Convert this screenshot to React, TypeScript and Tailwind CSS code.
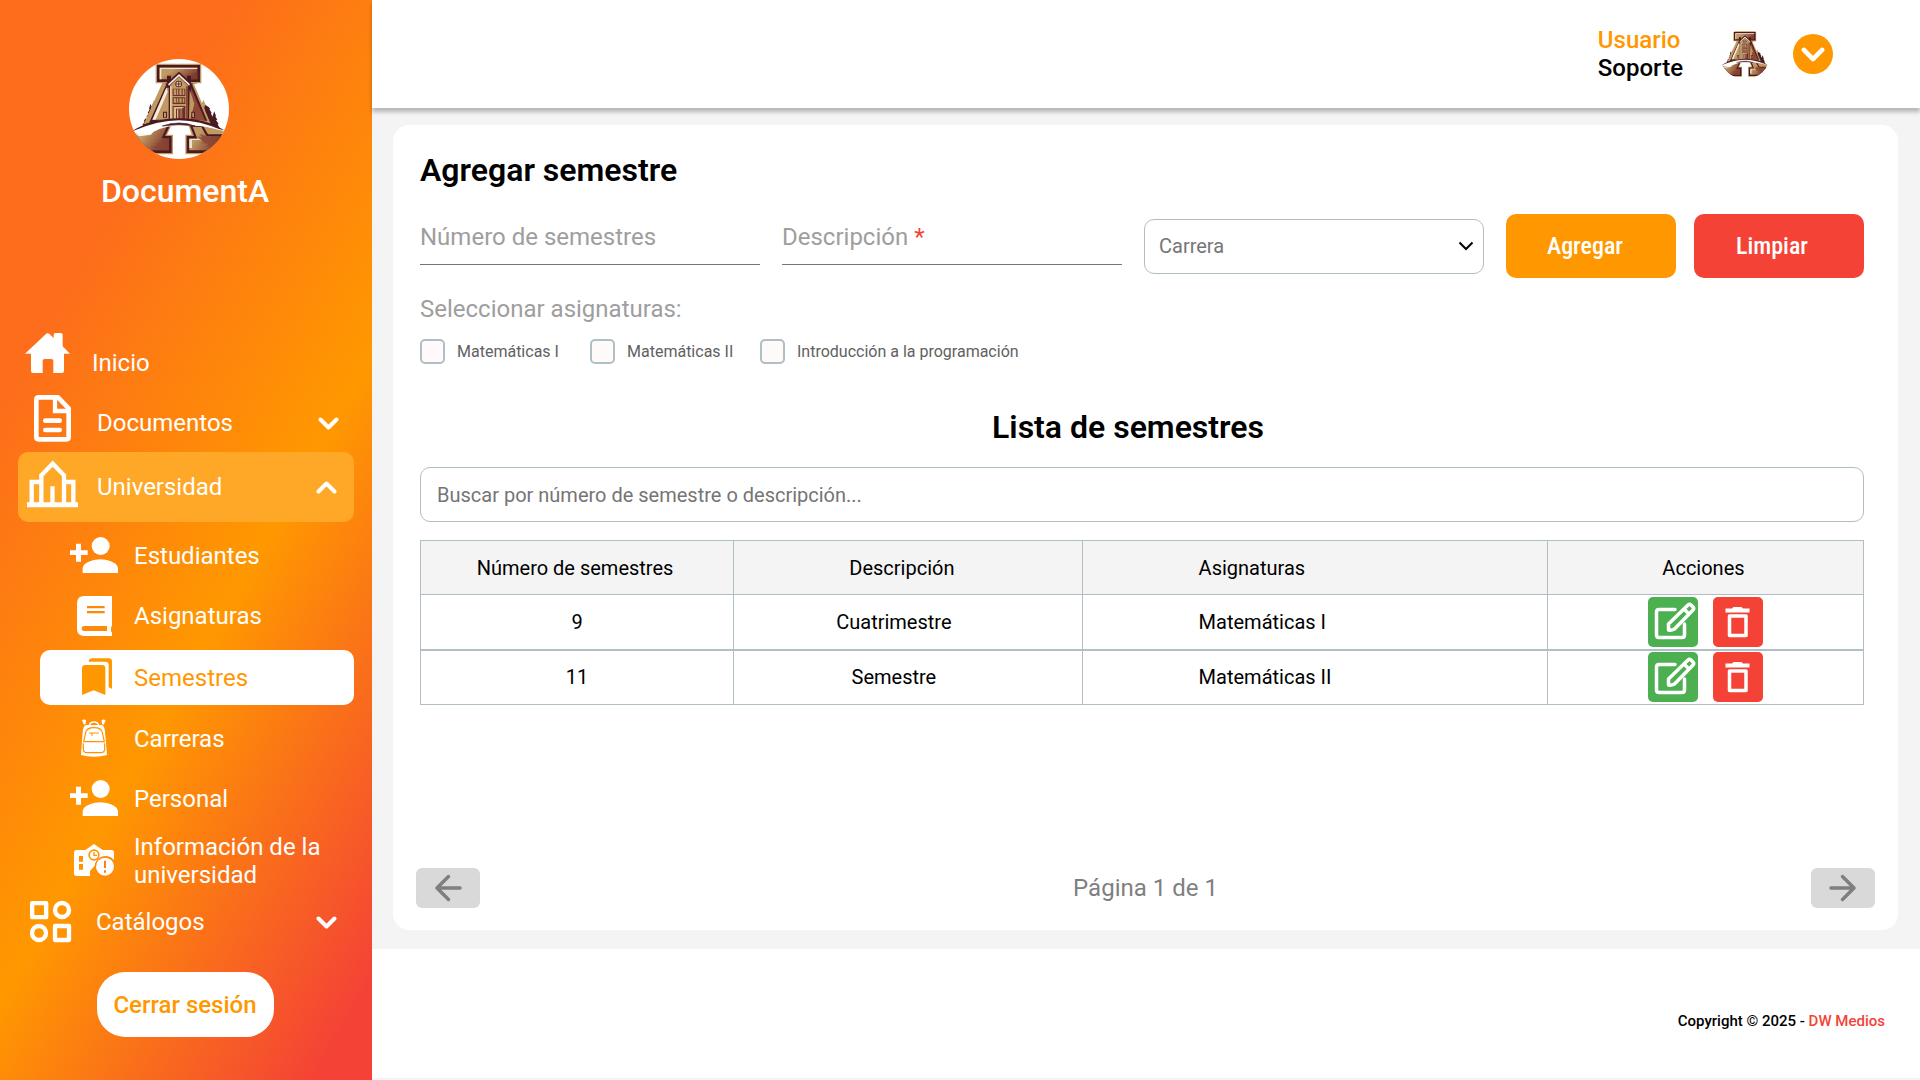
import React from "react";

/* ---------- Logo ---------- */

function Logo({ className, disc, id }: { className: string; disc?: boolean; id: string }) {
  return (
    <svg viewBox="12 12 300 300" className={className} role="img" aria-label="DocumentA">
      <defs>
        <clipPath id={`${id}-clip`}>
          <circle cx="162" cy="162" r="150" />
        </clipPath>
        <linearGradient id={`${id}-fill`} x1="0" y1="0" x2="1" y2="0.5">
          <stop offset="0.35" stopColor="#c19a63" />
          <stop offset="1" stopColor="#7f3a2e" />
        </linearGradient>
      </defs>
      <g clipPath={`url(#${id}-clip)`}>
        {disc && <rect x="12" y="12" width="300" height="300" fill="#ffffff" />}
        {/* trees */}
        <path d="M88 134l5 14-3 1 6 16-4 1 4 40H74l4-50z" fill="#c19a63" />
        <path d="M235 134l-5 14 3 1-6 16 4 1-4 40h22l-4-50z" fill="#c19a63" />
        <path d="M76 146l4 10-2 1 6 12-3 1 7 12-3 1 8 13-3 1 5 14-44 13 1-10 4-3-4-1 7-10-3-1 6-10 2 6 3-8-3-1 7-11-3-1 6-11-2-1z" fill="#4a1a22" />
        <path d="M241 150l-4 10 2 1-6 12 3 1-8 12 3 1-7 13 60 20-6-12 3-1-8-12 4-1-6-10 2-1-5-14-6 16-4-10 2-1-7-12 3-1-6-6z" fill="#4a1a22" />
        {/* legs */}
        <path d="M116 72h92l8 14-9 2 50 118-40-10H98l-42 12 56-124z" fill="#c19a63" />
        <path d="M120 76h84l-2 14 45 108-40-6h-90l-46 14 52-116z" fill="#4a1a22" />
        <path d="M124 98h10v96H82z" fill="#c19a63" />
        <path d="M124 98l-42 96h10l36-84z" fill="#f5eadb" />
        <path d="M198 98l42 98h-44z" fill="#8f4836" />
        <path d="M194 104l14 42-12 48h-4z" fill="#c19a63" />
        <path d="M114 170h12v18h-12zM199 170h11v18h-11z" fill="#4a1a22" />
        <path d="M117 173h6v13h-6zM202 173h5v13h-5z" fill="#c19a63" />
        {/* top serif */}
        <path d="M92 26h137v59H92z" fill="#c19a63" />
        <path d="M96 30h129v51H96z" fill="#4a1a22" />
        <path d="M104 38h113v35H104z" fill={`url(#${id}-fill)`} />
        <path d="M104 38h113v4H109v31h-5z" fill="#f1e3d0" />
        <path d="M217 38v35h-26l18-6-12-2 16-6-10-2 14-6z" fill="#7f3a2e" />
        {/* tower */}
        <path d="M126 62h12v10l24-22 24 22V62h12v24l-6 4v106h-61V90l-5-6z" fill="#4a1a22" />
        <path d="M135 92l27-27 27 27v102h-54z" fill="#c19a63" />
        <path d="M129 88l33-31 33 31-3 4-30-28-30 28z" fill="#f5eadb" />
        <path d="M135 94h5v100h-5z" fill="#e2c9a3" />
        <path d="M183 94h6v100h-6z" fill="#8f4836" />
        <circle cx="161" cy="87" r="10" fill="#4a1a22" />
        <circle cx="161" cy="87" r="7.5" fill="#e9d3b2" />
        <path d="M161 79v16M153 87h16" stroke="#4a1a22" strokeWidth="2.5" />
        <path d="M143 101h38v22h-38zM143 127h38v20h-38z" fill="#6b2f2a" />
        <path d="M146 103h7v17h-7zM155 103h5v17h-5zM163 103h7v17h-7zM173 103h5v17h-5zM146 130h7v13h-7zM155 130h5v13h-5zM163 130h7v13h-7zM173 130h5v13h-5z" fill="#c19a63" />
        <path d="M143 153h38v40h-38z" fill="#6b2f2a" />
        <path d="M146 156h32l-8 5h-17v32h-7zM156 163h4v28h-4z" fill="#d9b988" />
        <path d="M164 162h8v29h-8z" fill="#a2634a" />
        {/* left foot */}
        <path d="M24 228l76-20 40 2-14 29h18v59H40L10 240z" fill="#c19a63" />
        <path d="M28 230l74-20 33 2-15 31h20v51H44L14 242z" fill="#4a1a22" />
        <path d="M30 238l36-3 22-18 38-3-16 36h22v36H54z" fill={`url(#${id}-fill)`} />
        <path d="M30 238l34-2 20-19 14-4-20 26-34 5z" fill="#fbf4ea" />
        <path d="M132 250v36H68l30-5-24-5 34-5-22-4 30-5-14-4z" fill="#8a4434" opacity=".8" />
        {/* right foot */}
        <path d="M190 210l44 2 72 18 10 12-32 56H181v-59h19z" fill="#c19a63" />
        <path d="M195 212l40 2 14 24h60l-30 56h-94v-51h22z" fill="#4a1a22" />
        <path d="M203 215l26 1 16 28h46l-20 42h-78v-35h24z" fill={`url(#${id}-fill)`} />
        <path d="M193 251h26l12 4h-30v24h-8z" fill="#f1e3d0" />
        <path d="M229 216l14 27-20-6 10 11-16-4 20 18-12 2 28 2-10 8 34 0-16 12h10l20-42h-46z" fill="#8a4434" opacity=".85" />
        {/* bridge */}
        <path d="M22 228q60-38 140-38t136 36l-44-10q-90-26-164 0l-34 14z" fill="#4a1a22" />
        <path d="M24 228q76-32 138-32t128 30q-132-34-204 4l-14 8-46-2z" fill="#ffffff" />
        <path d="M112 213q24-9 50-9t48 9q-48-8-98 0z" fill="#4a1a22" stroke="#4a1a22" strokeWidth="2" />
      </g>
    </svg>
  );
}

/* ---------- Icons ---------- */

const Chevron = ({ up, className }: { up?: boolean; className: string }) => (
  <svg viewBox="0 0 21 13" className={className} fill="none" stroke="currentColor" strokeWidth="4" strokeLinecap="round" strokeLinejoin="round" aria-hidden="true">
    <path d={up ? "M2.5 10.5 10.5 2.5 18.5 10.5" : "M2.5 2.5 10.5 10.5 18.5 2.5"} />
  </svg>
);

const HomeIcon = () => (
  <svg viewBox="66 66 186 186" className="h-[62px] w-[62px] shrink-0" fill="currentColor" aria-hidden="true">
    <path d="M75 131 137 73q6-6 12 0l12 11V74q0-5 5-5h17q5 0 5 5v35l22 22h-18v52q0 6-6 6h-26v-36q0-6-6-6h-20q-6 0-6 6v36H99q-6 0-6-6v-52z" />
  </svg>
);

const DocIcon = () => (
  <svg viewBox="66 252 186 174" className="h-[58px] w-[62px] shrink-0" fill="none" stroke="currentColor" strokeWidth="14" strokeLinejoin="round" strokeLinecap="round" aria-hidden="true">
    <path d="M116 262h58l32 33v86q0 7-7 7h-83q-7 0-7-7V269q0-7 7-7z" />
    <path d="M165 265v38h38" strokeWidth="13" strokeLinecap="butt" strokeLinejoin="miter" />
    <path d="M136 332h43M136 360h43" />
  </svg>
);

const UniversityIcon = () => (
  <svg viewBox="66 426 186 210" className="h-[70px] w-[62px] shrink-0" fill="none" stroke="currentColor" strokeWidth="13" aria-hidden="true">
    <path d="M81 584h153" strokeWidth="15" />
    <path d="M124 580v-84l34-35 34 35v84" />
    <path d="M95 580v-64h28M192 516h28v64M157.500 580v-51" />
  </svg>
);

const CatalogIcon = () => (
  <svg viewBox="66 519 186 174" className="h-[58px] w-[62px] shrink-0" fill="none" stroke="currentColor" strokeWidth="13" strokeLinejoin="round" aria-hidden="true">
    <path d="M96.500 549.500h42v42h-42zM165 618h42v42h-42z" />
    <circle cx="186" cy="570" r="21" />
    <circle cx="117" cy="639" r="21" />
  </svg>
);

const PersonAddIcon = () => (
  <svg viewBox="186 18 180 180" className="h-[60px] w-[60px] shrink-0" fill="currentColor" aria-hidden="true">
    <circle cx="302" cy="78" r="27" />
    <path d="M248 159v-14c0-18 36-27 53-27s53 9 53 27v14zM228 71h15v20h20v14h-20v20h-15v-20h-18V91h18z" />
  </svg>
);

const BookIcon = () => (
  <svg viewBox="186 198 180 180" className="h-[60px] w-[60px] shrink-0" fill="currentColor" fillRule="evenodd" aria-hidden="true">
    <path d="M253 228h83v88q-5 8-3 18l3 4v10h-83q-22 0-22-20v-78q0-22 22-22zm8 30v7h53v-7zm0 15v7h53v-7zm-8 45q-8 0-8 7.500t8 7.500h68v-15z" />
  </svg>
);

const BookmarksIcon = () => (
  <svg viewBox="186 390 180 165" className="h-[55px] w-[60px] shrink-0" fill="currentColor" aria-hidden="true">
    <path d="M256 435h50q10 0 10 10v80l-35-14-35 14v-80q0-10 10-10z" />
    <path d="M266 425q1-10 11-10h49q10 0 10 10v81l-10-4v-67q0-10-10-10z" />
  </svg>
);

const BackpackIcon = () => (
  <svg viewBox="186 -33 180 180" className="h-[60px] w-[60px] shrink-0" fill="none" stroke="currentColor" aria-hidden="true">
    <path d="M246 1q6-4 12-1l-1 12-5 2zM317 1q-6-4-12-1l1 12 5 2z" fill="currentColor" stroke="none" />
    <path d="M268 16q2-10 14-10t14 10" strokeWidth="4" />
    <path fill="currentColor" stroke="none" d="M258 15h48q7 2 9 20l6 70q-18 5-39 5t-39-5l5-70q2-18 10-20z" />
    <g stroke="#ff9300" strokeWidth="3.500">
      <path d="M251 65l6-27q3-15 25-15t25 15l6 27z" />
      <path d="M250 70v17q0 11 12 11h40q12 0 12-11V70" />
      <path d="M267 39h30M276 39v8" />
    </g>
  </svg>
);

const SchoolInfoIcon = () => (
  <svg viewBox="186 327 180 192" className="h-[64px] w-[60px] shrink-0" aria-hidden="true">
    <path fill="currentColor" d="M230 390h26l26-18 26 18h26q8 0 8 8v22q-10-12-27-12-26 3-29 27l-16 18v15h-40q-8 0-8-8v-62q0-8 8-8z" />
    <g fill="#ff9300">
      <path d="M237 408h12v17h-12zM237 432h12v17h-12z" />
      <circle cx="282" cy="405" r="17" />
    </g>
    <circle cx="282" cy="405" r="12" fill="currentColor" />
    <path d="M282 396v10h9" fill="none" stroke="#ff9300" strokeWidth="4" />
    <circle cx="315" cy="440" r="31" fill="#fe8a0c" />
    <circle cx="315" cy="440" r="27" fill="currentColor" />
    <path d="M315 422v22M315 451v7" stroke="#fe7d14" strokeWidth="6" />
  </svg>
);

const EditIcon = () => (
  <svg viewBox="0 0 50 50" className="size-[50px]" fill="none" stroke="currentColor" strokeWidth="3.5" strokeLinejoin="round" strokeLinecap="round" aria-hidden="true">
    <path d="M27 12.500H11q-2.500 0-2.500 2.500v23q0 2.500 2.500 2.500h23q2.500 0 2.500-2.500V27" />
    <path d="M20.500 33v-6L40 8q1.500-1.300 3 0l2 2q1.500 1.500 0 3L26.500 32q-3 1.500-6 1zM36 12l5 5" />
  </svg>
);

const TrashIcon = () => (
  <svg viewBox="0 0 50 50" className="size-[50px]" fill="none" aria-hidden="true">
    <path fill="currentColor" d="M20.500 10h8l1.500 1.500h6.500v4h-24v-4H19z" />
    <path stroke="currentColor" strokeWidth="3.5" strokeLinejoin="round" d="M16.500 19h16.500v19.500H16.500z" />
  </svg>
);

const ArrowIcon = ({ right }: { right?: boolean }) => (
  <svg viewBox="0 0 64 40" className={right ? "h-10 w-16 rotate-180" : "h-10 w-16"} fill="none" stroke="#7f7f7f" strokeWidth="3.5" strokeLinecap="round" strokeLinejoin="round" aria-hidden="true">
    <path d="M44 20H21M32.500 8.500 21 20l11.500 11.500" />
  </svg>
);

/* ---------- Sidebar ---------- */

const subItems = [
  { label: "Estudiantes", icon: <PersonAddIcon /> },
  { label: "Asignaturas", icon: <BookIcon /> },
  { label: "Semestres", icon: <BookmarksIcon />, active: true },
  { label: "Carreras", icon: <BackpackIcon /> },
  { label: "Personal", icon: <PersonAddIcon /> },
  { label: "Información de la universidad", icon: <SchoolInfoIcon /> },
];

function Sidebar() {
  return (
    <aside className="flex w-[372px] shrink-0 flex-col bg-[linear-gradient(120deg,#fd6d1b_23%,#ff9800_58%,#f44336_94%)] px-[18px] pt-[59px] pb-[42px] text-white">
      <div className="flex flex-col items-center pr-[2px]">
        <Logo id="side" disc className="mr-3 size-[100px]" />
        <p className="mt-3 text-[32px] leading-10 font-medium">DocumentA</p>
      </div>
      <nav className="mt-[121px] text-2xl leading-7">
        <a href="#inicio" className="flex items-center pl-1">
          <HomeIcon />
          <span className="ml-2">Inicio</span>
        </a>
        <button type="button" className="flex w-full items-center pr-[15px] pl-1 text-left">
          <DocIcon />
          <span className="ml-[13px] flex-1">Documentos</span>
          <Chevron className="h-[13px] w-[21px]" />
        </button>
        <button type="button" aria-expanded="true" className="mb-1 flex w-full items-center rounded-[10px] bg-[#ffa726] pr-[17px] pl-1 text-left">
          <UniversityIcon />
          <span className="ml-[13px] flex-1">Universidad</span>
          <Chevron up className="h-[13px] w-[21px]" />
        </button>
        <ul className="pl-[22px]">
          {subItems.map((item) => (
            <li key={item.label}>
              <a
                href={`#${item.label.toLowerCase().split(" ")[0]}`}
                aria-current={item.active ? "page" : undefined}
                className={
                  item.active
                    ? "my-1 flex items-center gap-3 rounded-[10px] bg-white pl-[22px] text-[#ff9800]"
                    : "flex items-center gap-3 pl-[22px]"
                }
              >
                {item.icon}
                <span>{item.label}</span>
              </a>
            </li>
          ))}
        </ul>
        <button type="button" className="flex w-full items-center pr-[17px] pl-1 text-left">
          <CatalogIcon />
          <span className="ml-3 flex-1">Catálogos</span>
          <Chevron className="h-[13px] w-[21px]" />
        </button>
      </nav>
      <div className="mt-[21px] flex justify-center pr-[2px]">
        <button type="button" className="h-[65px] w-[177px] rounded-[28px] bg-white text-2xl font-medium text-[#ff9800]">
          Cerrar sesión
        </button>
      </div>
    </aside>
  );
}

/* ---------- Main ---------- */

function TopBar() {
  return (
    <header className="relative flex h-[108px] items-center justify-end bg-white pr-[87px] shadow-[0_4px_4px_rgba(0,0,0,0.25)]">
      <div className="mr-[37px] text-2xl leading-7 font-medium">
        <p className="text-[#ff9800]">Usuario</p>
        <p className="text-black">Soporte</p>
      </div>
      <Logo id="top" className="mr-[23px] size-[50px]" />
      <button type="button" aria-label="Abrir menú de usuario" className="flex size-10 items-center justify-center rounded-full bg-[#ff9800] text-white">
        <Chevron className="h-[15px] w-6" />
      </button>
    </header>
  );
}

const subjects = ["Matemáticas I", "Matemáticas II", "Introducción a la programación"];

const fields = [
  { id: "numero", label: "Número de semestres", required: false },
  { id: "descripcion", label: "Descripción", required: true },
];

function SemesterForm() {
  return (
    <form className="pr-[11px] pl-1" onSubmit={(e) => e.preventDefault()}>
      <h1 className="text-[32px] leading-10 font-semibold text-black">Agregar semestre</h1>
      <div className="mt-6 grid grid-cols-[1fr_1fr_1fr_auto] items-start gap-[22px]">
        {fields.map((field) => (
          <div key={field.id} className="flex h-[51px] min-w-0 items-center border-b border-[#757575] pb-1">
            <label htmlFor={field.id} className="shrink-0 text-2xl text-[#9e9e9e]">
              {field.label}
              {field.required && <span className="text-[#f44336]"> *</span>}
            </label>
            <input id={field.id} required={field.required} className="ml-2 w-0 min-w-0 flex-1 text-2xl text-black outline-none" />
          </div>
        ))}
        <div className="grid min-w-0 items-center self-center">
          <select aria-label="Carrera" className="col-start-1 row-start-1 h-[55px] w-full appearance-none rounded-[10px] border border-[#b0bec5] bg-white px-[14px] text-xl text-[#757575]">
            <option>Carrera</option>
          </select>
          <svg viewBox="0 0 16 10" className="pointer-events-none col-start-1 row-start-1 mr-[10px] h-[10px] w-4 justify-self-end" fill="none" stroke="#000000" strokeWidth="2" aria-hidden="true">
            <path d="M1.500 1.500 8 8l6.500-6.500" />
          </svg>
        </div>
        <div className="flex gap-[18px] font-['Roboto_Condensed',Roboto,sans-serif] text-2xl font-medium text-white">
          <button type="submit" className="h-16 w-[170px] rounded-[10px] bg-[#ff9800] pr-3">Agregar</button>
          <button type="reset" className="h-16 w-[170px] rounded-[10px] bg-[#f44336] pr-[14px]">Limpiar</button>
        </div>
      </div>
      <fieldset className="mt-[17px]">
        <legend className="text-2xl leading-7 text-[#9e9e9e]">Seleccionar asignaturas:</legend>
        <div className="mt-4 grid grid-cols-[170px_170px_auto] justify-start">
          {subjects.map((s) => (
            <label key={s} className="flex items-center gap-3 text-base text-[#616161]">
              <input type="checkbox" className="size-[25px] appearance-none rounded-[5px] border-2 border-[#b0bec5] bg-[#fffafa] checked:bg-[#ff9800]" />
              {s}
            </label>
          ))}
        </div>
      </fieldset>
    </form>
  );
}

const rows = [
  { number: "9", description: "Cuatrimestre", subject: "Matemáticas I" },
  { number: "11", description: "Semestre", subject: "Matemáticas II" },
];

function SemesterTable() {
  return (
    <table className="mt-[18px] w-full table-fixed border-collapse text-xl text-black">
      <colgroup>
        <col className="w-[21.700%]" />
        <col className="w-[24.150%]" />
        <col className="w-[32.250%]" />
        <col />
      </colgroup>
      <thead>
        <tr className="h-[54px] bg-[#f4f4f4] [&>th]:border [&>th]:border-[#b0bec5] [&>th]:p-0 [&>th]:font-normal">
          <th scope="col">
            <span className="pr-1">Número de semestres</span>
          </th>
          <th scope="col">
            <span className="pr-3">Descripción</span>
          </th>
          <th scope="col" className="text-left">
            <span className="pl-[116px]">Asignaturas</span>
          </th>
          <th scope="col">
            <span className="pr-1">Acciones</span>
          </th>
        </tr>
      </thead>
      <tbody>
        {rows.map((row) => (
          <tr key={row.number} className="h-[55px] [&>td]:border [&>td]:border-b-2 [&>td]:border-[#b0bec5] [&>td]:p-0 last:[&>td]:border-b">
            <td className="text-center">{row.number}</td>
            <td className="text-center">
              <span className="pr-7">{row.description}</span>
            </td>
            <td>
              <span className="pl-[116px]">{row.subject}</span>
            </td>
            <td>
              <div className="flex justify-center gap-[15px] text-white">
                <button type="button" aria-label="Editar" className="size-[50px] rounded-[5px] bg-[#4caf50]">
                  <EditIcon />
                </button>
                <button type="button" aria-label="Eliminar" className="size-[50px] rounded-[5px] bg-[#f44336]">
                  <TrashIcon />
                </button>
              </div>
            </td>
          </tr>
        ))}
      </tbody>
    </table>
  );
}

export default function App() {
  return (
    <div className="flex min-h-screen bg-[#f4f4f4] font-[Roboto,sans-serif]">
      <Sidebar />
      <div className="flex min-w-0 flex-1 flex-col">
        <TopBar />
        <main className="flex flex-1 flex-col pt-[17px] pr-[22px] pb-[19px] pl-[21px]">
          <section className="flex flex-1 flex-col rounded-[16px] bg-white px-[23px] pt-[25px] pb-[22px]">
            <SemesterForm />
            <div className="mt-[43px] pr-[11px] pl-1">
              <h2 className="pr-7 text-center text-[32px] leading-10 font-semibold text-black">Lista de semestres</h2>
              <input
                type="search"
                aria-label="Buscar semestre"
                placeholder="Buscar por número de semestre o descripción..."
                className="mt-5 h-[55px] w-full rounded-[10px] border border-[#b0bec5] px-4 text-xl placeholder:text-[#757575]"
              />
              <SemesterTable />
            </div>
            <div className="mt-auto flex items-center justify-between text-2xl text-[#7f7f7f]">
              <button type="button" aria-label="Página anterior" className="rounded-md bg-[#d9d9d9]">
                <ArrowIcon />
              </button>
              <span>Página 1 de 1</span>
              <button type="button" aria-label="Página siguiente" className="rounded-md bg-[#d9d9d9]">
                <ArrowIcon right />
              </button>
            </div>
          </section>
        </main>
        <footer className="mb-[2px] flex h-[129px] items-center justify-end bg-white pt-4 pr-[35px] text-[15px] font-medium text-black">
          <p>
            Copyright © 2025 - <a href="#dw-medios" className="text-[#f44336]">DW Medios</a>
          </p>
        </footer>
      </div>
    </div>
  );
}
